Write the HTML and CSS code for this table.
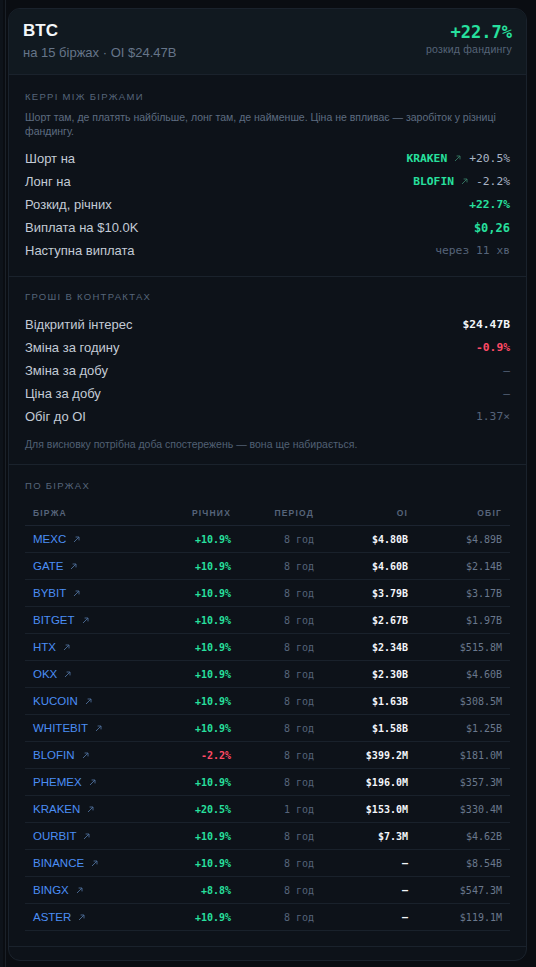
FILE: index.html
```html
<!DOCTYPE html>
<html lang="uk">
<head>
<meta charset="utf-8">
<title>BTC</title>
<link rel="stylesheet" href="styles.css">
</head>
<body>
<div class="card">
  <header class="head">
    <div class="head-left">
      <div class="sym">BTC</div>
      <div class="sub">на 15 біржах · OI $24.47B</div>
    </div>
    <div class="head-right">
      <div class="spread">+22.7%</div>
      <div class="spread-label">розкид фандингу</div>
    </div>
  </header>

  <section class="sec sec-1">
    <div class="sec-title">Керрі між біржами</div>
    <p class="desc">Шорт там, де платять найбільше, лонг там, де найменше. Ціна не впливає — заробіток у різниці фандингу.</p>
    <div class="rows">
      <div class="row"><span class="lbl">Шорт на</span><span class="val"><span class="ex">KRAKEN</span><svg class="arr g" viewBox="0 0 7 7"><path d="M1 6 L6 1 M2.6 1 H6 V4.4"/></svg><span class="mut">+20.5%</span></span></div>
      <div class="row"><span class="lbl">Лонг на</span><span class="val"><span class="ex">BLOFIN</span><svg class="arr g" viewBox="0 0 7 7"><path d="M1 6 L6 1 M2.6 1 H6 V4.4"/></svg><span class="mut">-2.2%</span></span></div>
      <div class="row"><span class="lbl">Розкид, річних</span><span class="val green">+22.7%</span></div>
      <div class="row"><span class="lbl">Виплата на $10.0K</span><span class="val green big">$0,26</span></div>
      <div class="row"><span class="lbl">Наступна виплата</span><span class="val dim">через 11 хв</span></div>
    </div>
  </section>

  <section class="sec sec-2">
    <div class="sec-title">Гроші в контрактах</div>
    <div class="rows">
      <div class="row"><span class="lbl">Відкритий інтерес</span><span class="val white">$24.47B</span></div>
      <div class="row"><span class="lbl">Зміна за годину</span><span class="val red">-0.9%</span></div>
      <div class="row"><span class="lbl">Зміна за добу</span><span class="val dim">—</span></div>
      <div class="row"><span class="lbl">Ціна за добу</span><span class="val dim">—</span></div>
      <div class="row"><span class="lbl">Обіг до OI</span><span class="val dim">1.37×</span></div>
    </div>
    <p class="note">Для висновку потрібна доба спостережень — вона ще набирається.</p>
  </section>

  <section class="sec sec-last">
    <div class="sec-title">По біржах</div>
    <div class="tbl">
      <div class="tr th"><span class="c-name">Біржа</span><span>Річних</span><span>Період</span><span>OI</span><span>Обіг</span></div>
      <div class="tr"><span class="c-name"><a>MEXC</a><svg class="arr b" viewBox="0 0 7 7"><path d="M1 6 L6 1 M2.6 1 H6 V4.4"/></svg></span><span class="green">+10.9%</span><span class="dim">8 год</span><span class="white">$4.80B</span><span class="gray">$4.89B</span></div>
      <div class="tr"><span class="c-name"><a>GATE</a><svg class="arr b" viewBox="0 0 7 7"><path d="M1 6 L6 1 M2.6 1 H6 V4.4"/></svg></span><span class="green">+10.9%</span><span class="dim">8 год</span><span class="white">$4.60B</span><span class="gray">$2.14B</span></div>
      <div class="tr"><span class="c-name"><a>BYBIT</a><svg class="arr b" viewBox="0 0 7 7"><path d="M1 6 L6 1 M2.6 1 H6 V4.4"/></svg></span><span class="green">+10.9%</span><span class="dim">8 год</span><span class="white">$3.79B</span><span class="gray">$3.17B</span></div>
      <div class="tr"><span class="c-name"><a>BITGET</a><svg class="arr b" viewBox="0 0 7 7"><path d="M1 6 L6 1 M2.6 1 H6 V4.4"/></svg></span><span class="green">+10.9%</span><span class="dim">8 год</span><span class="white">$2.67B</span><span class="gray">$1.97B</span></div>
      <div class="tr"><span class="c-name"><a>HTX</a><svg class="arr b" viewBox="0 0 7 7"><path d="M1 6 L6 1 M2.6 1 H6 V4.4"/></svg></span><span class="green">+10.9%</span><span class="dim">8 год</span><span class="white">$2.34B</span><span class="gray">$515.8M</span></div>
      <div class="tr"><span class="c-name"><a>OKX</a><svg class="arr b" viewBox="0 0 7 7"><path d="M1 6 L6 1 M2.6 1 H6 V4.4"/></svg></span><span class="green">+10.9%</span><span class="dim">8 год</span><span class="white">$2.30B</span><span class="gray">$4.60B</span></div>
      <div class="tr"><span class="c-name"><a>KUCOIN</a><svg class="arr b" viewBox="0 0 7 7"><path d="M1 6 L6 1 M2.6 1 H6 V4.4"/></svg></span><span class="green">+10.9%</span><span class="dim">8 год</span><span class="white">$1.63B</span><span class="gray">$308.5M</span></div>
      <div class="tr"><span class="c-name"><a>WHITEBIT</a><svg class="arr b" viewBox="0 0 7 7"><path d="M1 6 L6 1 M2.6 1 H6 V4.4"/></svg></span><span class="green">+10.9%</span><span class="dim">8 год</span><span class="white">$1.58B</span><span class="gray">$1.25B</span></div>
      <div class="tr"><span class="c-name"><a>BLOFIN</a><svg class="arr b" viewBox="0 0 7 7"><path d="M1 6 L6 1 M2.6 1 H6 V4.4"/></svg></span><span class="red">-2.2%</span><span class="dim">8 год</span><span class="white">$399.2M</span><span class="gray">$181.0M</span></div>
      <div class="tr"><span class="c-name"><a>PHEMEX</a><svg class="arr b" viewBox="0 0 7 7"><path d="M1 6 L6 1 M2.6 1 H6 V4.4"/></svg></span><span class="green">+10.9%</span><span class="dim">8 год</span><span class="white">$196.0M</span><span class="gray">$357.3M</span></div>
      <div class="tr"><span class="c-name"><a>KRAKEN</a><svg class="arr b" viewBox="0 0 7 7"><path d="M1 6 L6 1 M2.6 1 H6 V4.4"/></svg></span><span class="green">+20.5%</span><span class="dim">1 год</span><span class="white">$153.0M</span><span class="gray">$330.4M</span></div>
      <div class="tr"><span class="c-name"><a>OURBIT</a><svg class="arr b" viewBox="0 0 7 7"><path d="M1 6 L6 1 M2.6 1 H6 V4.4"/></svg></span><span class="green">+10.9%</span><span class="dim">8 год</span><span class="white">$7.3M</span><span class="gray">$4.62B</span></div>
      <div class="tr"><span class="c-name"><a>BINANCE</a><svg class="arr b" viewBox="0 0 7 7"><path d="M1 6 L6 1 M2.6 1 H6 V4.4"/></svg></span><span class="green">+10.9%</span><span class="dim">8 год</span><span class="white">—</span><span class="gray">$8.54B</span></div>
      <div class="tr"><span class="c-name"><a>BINGX</a><svg class="arr b" viewBox="0 0 7 7"><path d="M1 6 L6 1 M2.6 1 H6 V4.4"/></svg></span><span class="green">+8.8%</span><span class="dim">8 год</span><span class="white">—</span><span class="gray">$547.3M</span></div>
      <div class="tr"><span class="c-name"><a>ASTER</a><svg class="arr b" viewBox="0 0 7 7"><path d="M1 6 L6 1 M2.6 1 H6 V4.4"/></svg></span><span class="green">+10.9%</span><span class="dim">8 год</span><span class="white">—</span><span class="gray">$119.1M</span></div>
    </div>
  </section>
  <div class="foot"></div>
</div>
</body>
</html>
```

FILE: styles.css
```css
* { box-sizing: border-box; }

html, body { height: 100%; }

body {
  margin: 0;
  padding: 8px 9px 8px 8px;
  background:
    linear-gradient(to right, #0e131a 0 3px, #0a0d12 3px 5px, #1a2028 5px 6px, #0a0d12 6px);
  font-family: "Liberation Sans", Arial, sans-serif;
  color: #c5cdd8;
}

.card {
  border: 1px solid #1a222c;
  border-radius: 12px;
  background: #0d1219;
  overflow: hidden;
}

.head {
  display: flex;
  justify-content: space-between;
  align-items: flex-start;
  padding: 12px 14px 13px 14px;
  background: #111920;
  border-bottom: 1px solid #1a222c;
}

.sym {
  font-size: 17px;
  font-weight: 700;
  color: #f4f7fa;
  line-height: 20px;
}

.sub {
  margin-top: 3px;
  font-size: 13px;
  line-height: 17px;
  color: #667589;
}

.head-right { text-align: right; }

.spread {
  font-family: "DejaVu Sans Mono", "Liberation Mono", monospace;
  font-weight: 700;
  font-size: 17px;
  line-height: 22px;
  color: #27e09e;
}

.spread-label {
  font-size: 10.5px;
  line-height: 12px;
  color: #566478;
  letter-spacing: 0.2px;
}

.sec {
  padding: 15px 16px 14px 16px;
  border-bottom: 1px solid #1a222c;
}

.sec-2 { padding-top: 13px; padding-bottom: 13px; }
.sec-2 .rows { margin-top: 9px; }
.sec-2 .note { margin-top: 9px; }

.sec-title {
  font-size: 9.5px;
  line-height: 14px;
  text-transform: uppercase;
  letter-spacing: 1.3px;
  color: #56657a;
}

.desc {
  margin: 6px 0 0;
  font-size: 10.5px;
  line-height: 14px;
  color: #5d6c80;
}

.rows { margin-top: 9px; }

.row {
  display: flex;
  justify-content: space-between;
  align-items: center;
  height: 23px;
}

.lbl {
  font-size: 13px;
  color: #c3cbd6;
}

.val {
  display: flex;
  align-items: center;
  font-family: "DejaVu Sans Mono", "Liberation Mono", monospace;
  font-size: 11.3px;
  font-weight: 700;
}

.ex { color: #27e09e; }

.arr {
  width: 7px;
  height: 7px;
  fill: none;
  stroke-width: 0.9;
  flex: none;
}

.val .arr { margin: 0 8px 0 7px; }

.arr.g { stroke: #357a65; }
.arr.b { stroke: #4d6e98; }

.mut { color: #a9b5c6; font-weight: 400; }

.green { color: #27e09e; }
.red { color: #ff4a66; }
.white { color: #f3f6fa; }
.dim { color: #56647a; font-weight: 400; }
.gray { color: #6a788c; }

.val.big { font-size: 12px; }

.note {
  margin: 8px 0 0;
  font-size: 10.5px;
  line-height: 14px;
  color: #516074;
}

.sec-last { padding-top: 14px; padding-bottom: 15px; }

.tbl { margin-top: 8px; }

.tr {
  display: grid;
  grid-template-columns: 1fr 80px 83px 94px 94px;
  align-items: center;
  height: 27px;
  padding: 0 8px;
  border-bottom: 1px solid #19212b;
  font-family: "DejaVu Sans Mono", "Liberation Mono", monospace;
  font-size: 10px;
  text-align: right;
}

.tr > .c-name {
  display: flex;
  align-items: center;
  text-align: left;
}

.tr.th {
  height: 25px;
  font-family: "Liberation Sans", Arial, sans-serif;
  font-weight: 700;
  font-size: 8.5px;
  letter-spacing: 1.2px;
  text-transform: uppercase;
  color: #56647a;
  border-bottom-color: #1c2430;
}

.tr .green, .tr .red { font-weight: 700; }
.tr .white { font-weight: 700; }

.c-name a {
  font-family: "Liberation Sans", Arial, sans-serif;
  font-size: 11.5px;
  color: #4b8ef5;
}

.c-name .arr { margin-left: 7px; }

.foot { height: 13px; }
```
